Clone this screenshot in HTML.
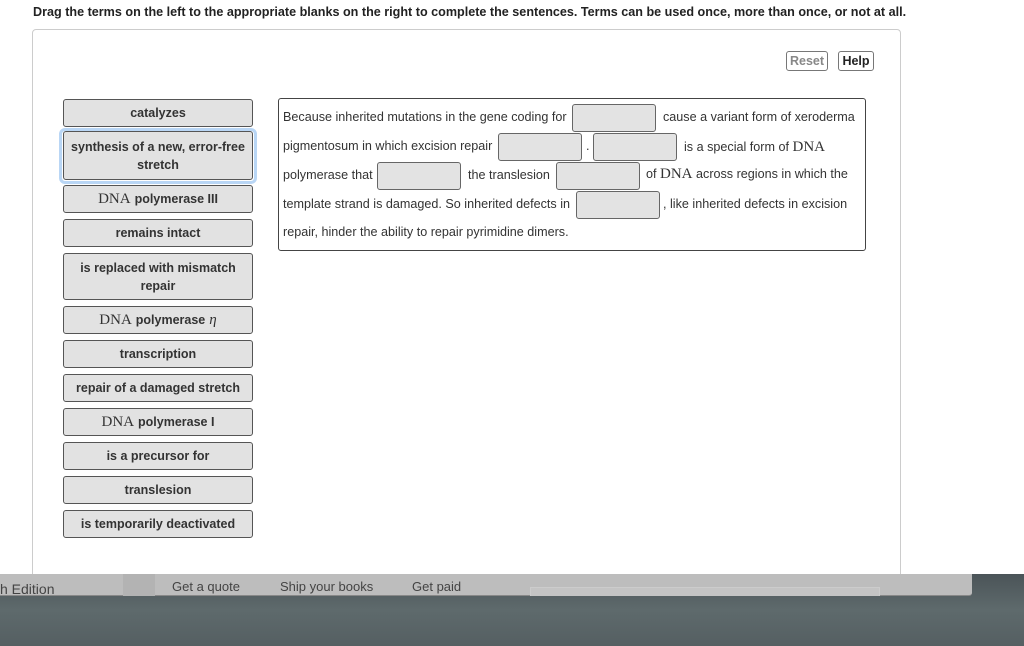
<!DOCTYPE html>
<html><head><meta charset="utf-8"><style>
*{margin:0;padding:0;box-sizing:border-box}
body{width:1024px;height:646px;overflow:hidden;background:#fff;font-family:"Liberation Sans",Arial,sans-serif;position:relative}
.a{position:absolute}
.instr{left:33px;top:5px;font-size:12.6px;font-weight:bold;color:#222}
.panel{left:32px;top:29px;width:869px;height:560px;border:1px solid #ccc;border-radius:4px;background:#fff}
.btn{top:51px;height:20px;border:1px solid #777;border-radius:3px;font-size:12.5px;font-weight:bold;text-align:center;line-height:18px;background:#fff}
.t{left:63px;width:190px;border:1px solid #555;border-radius:3px;background:#e2e2e2;font-size:12.5px;font-weight:bold;color:#333;text-align:center;display:flex;align-items:center;justify-content:center;line-height:18px}
.s{font-family:"Liberation Serif",serif;font-weight:normal;font-size:15px;margin-right:4px}
.box{left:278px;top:98px;width:588px;height:153px;border:1px solid #444;border-radius:3px}
.tx{font-size:12.6px;color:#333;white-space:nowrap}
.bl{width:84px;height:28px;border:1px solid #666;border-radius:3px;background:#e3e3e3}
</style></head><body>
<div class="a instr">Drag the terms on the left to the appropriate blanks on the right to complete the sentences. Terms can be used once, more than once, or not at all.</div>
<div class="a panel"></div>
<div class="a btn" style="left:786px;width:42px;color:#888">Reset</div>
<div class="a btn" style="left:838px;width:36px;color:#222">Help</div>

<div class="a t" style="top:99px;height:28px">catalyzes</div>
<div class="a" style="left:59px;top:128px;width:198px;height:56px;border:3px solid #b9d6f5;border-radius:6px"></div>
<div class="a t" style="top:131px;height:49px">synthesis of a new, error-free<br>stretch</div>
<div class="a t" style="top:185px;height:28px"><span class="s">DNA</span>polymerase III</div>
<div class="a t" style="top:219px;height:28px">remains intact</div>
<div class="a t" style="top:253px;height:47px">is replaced with mismatch<br>repair</div>
<div class="a t" style="top:306px;height:28px"><span class="s">DNA</span>polymerase <i class="s" style="margin:0 0 0 4px">η</i></div>
<div class="a t" style="top:340px;height:28px">transcription</div>
<div class="a t" style="top:374px;height:28px">repair of a damaged stretch</div>
<div class="a t" style="top:408px;height:28px"><span class="s">DNA</span>polymerase I</div>
<div class="a t" style="top:442px;height:28px">is a precursor for</div>
<div class="a t" style="top:476px;height:28px">translesion</div>
<div class="a t" style="top:510px;height:28px">is temporarily deactivated</div>

<div class="a box"></div>
<div class="a tx" style="left:283px;top:110px">Because inherited mutations in the gene coding for</div>
<div class="a bl" style="left:572px;top:104px"></div>
<div class="a tx" style="left:663px;top:110px">cause a variant form of xeroderma</div>
<div class="a tx" style="left:283px;top:139px">pigmentosum in which excision repair</div>
<div class="a bl" style="left:498px;top:133px"></div>
<div class="a tx" style="left:586px;top:139px">.</div>
<div class="a bl" style="left:593px;top:133px"></div>
<div class="a tx" style="left:684px;top:139px">is a special form of <span style="font-family:'Liberation Serif',serif;font-size:15px">DNA</span></div>
<div class="a tx" style="left:283px;top:168px">polymerase that</div>
<div class="a bl" style="left:377px;top:162px"></div>
<div class="a tx" style="left:468px;top:168px">the translesion</div>
<div class="a bl" style="left:556px;top:162px"></div>
<div class="a tx" style="left:646px;top:166px">of <span style="font-family:'Liberation Serif',serif;font-size:15px">DNA</span> across regions in which the</div>
<div class="a tx" style="left:283px;top:197px">template strand is damaged. So inherited defects in</div>
<div class="a bl" style="left:576px;top:191px"></div>
<div class="a tx" style="left:663px;top:197px">, like inherited defects in excision</div>
<div class="a tx" style="left:283px;top:225px">repair, hinder the ability to repair pyrimidine dimers.</div>

<div class="a" style="left:0;top:574px;width:1024px;height:72px;background:linear-gradient(180deg,#4b5458,#5e6a6c 50%,#555f62)"></div>
<div class="a" style="left:0;top:574px;width:972px;height:22px;background:#bdbdbd;border-bottom:1px solid #888;border-radius:0 0 3px 0"></div>
<div class="a" style="left:123px;top:574px;width:32px;height:22px;background:#b3b3b3"></div>
<div class="a" style="left:530px;top:587px;width:350px;height:9px;border:1px solid #ccc;border-bottom:none;background:#c4c4c4"></div>
<div class="a" style="left:0;top:581px;font-size:14px;color:#444">h Edition</div>
<div class="a" style="left:172px;top:579px;font-size:13px;color:#444">Get a quote</div>
<div class="a" style="left:280px;top:579px;font-size:13px;color:#444">Ship your books</div>
<div class="a" style="left:412px;top:579px;font-size:13px;color:#444">Get paid</div>
</body></html>
